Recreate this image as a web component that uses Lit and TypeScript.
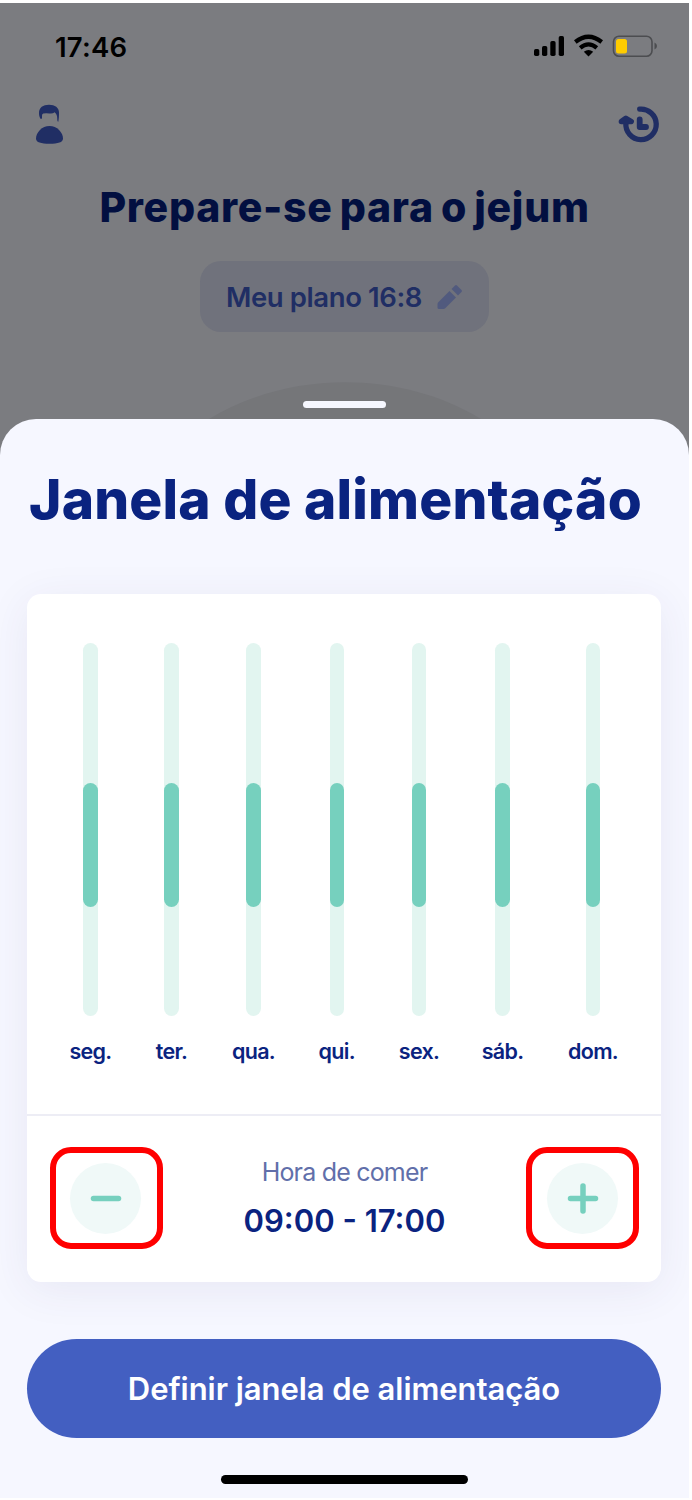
import { LitElement, html, css } from "lit";
import { customElement } from "lit/decorators.js";

const DAYS = ["seg.", "ter.", "qua.", "qui.", "sex.", "sáb.", "dom."];

@customElement("app-root")
export class AppRoot extends LitElement {
  static styles = css`
    :host { display: block; width: 692px; height: 1500px; overflow: hidden; background: #fff; font-family: Inter, "Liberation Sans", sans-serif; }
    * { box-sizing: border-box; }
    .phone { width: 689px; height: 1498px; padding-top: 3px; background: #fff; }
    .screen { height: 1495px; background: #7b7c80; display: flex; flex-direction: column; align-items: center; overflow: hidden; white-space: nowrap; }
    .status { width: 100%; height: 86px; padding: 2px 31px 0 55px; display: flex; align-items: center; justify-content: space-between; flex: none; }
    .time { font-size: 27.5px; font-weight: 600; line-height: 34px; letter-spacing: 0.2px; color: #000; }
    svg { display: block; overflow: visible; }
    .nav { width: 100%; height: 66px; padding: 0 28px 0 34px; display: flex; justify-content: space-between; align-items: center; flex: none; margin-top: 2px; }
    h1, h2 { margin: 0; }
    .heading { margin-top: 25px; font-size: 41px; line-height: 50px; height: 50px; font-weight: 800; color: #020f40; letter-spacing: 0.7px; word-spacing: -2.5px; }
    .plan { margin-top: 29px; width: 289px; height: 71px; border-radius: 21px; background: #70727c; display: flex; align-items: center; padding-left: 26px; gap: 15px; flex: none; }
    .plan-text { width: 196px; font-size: 27.5px; font-weight: 600; color: #202e64; letter-spacing: -0.4px; }
    .peek { width: 300px; height: 37px; flex: none; margin-top: 50px; display: flex; justify-content: center; position: relative; }
    .arc { position: absolute; left: 0; top: 0; }
    .grip { position: relative; width: 83px; height: 7px; border-radius: 4px; background: #f6f7ff; margin-top: 19px; }
    .sheet { width: 100%; flex: 1; background: #f6f7ff; border-radius: 36px 36px 0 0; padding: 46px 28px 0 27px; display: flex; flex-direction: column; align-items: center; }
    .title { align-self: flex-start; margin-left: 2px; font-size: 55px; font-weight: 800; line-height: 68px; color: #0a2380; letter-spacing: 0.2px; }
    .card { width: 634px; height: 688px; margin-top: 61px; background: #fff; border-radius: 14px; box-shadow: 0 8px 44px rgba(60, 55, 110, 0.08); flex: none; }
    .chart { height: 522px; padding: 49px 0 0 22.5px; display: grid; grid-template-columns: 82px 80px 84px 82.5px 82px 85px 96px; border-bottom: 2px solid #ededf5; }
    .day { display: flex; flex-direction: column; align-items: center; }
    .track { width: 14.5px; height: 373px; border-radius: 8px; background: #e2f5f0; padding-top: 139.5px; }
    .fill { height: 124.5px; border-radius: 8px; background: #76d0be; }
    .label { margin-top: 22px; font-size: 21.5px; line-height: 26px; font-weight: 600; color: #0a2380; letter-spacing: -0.7px; }
    .controls { height: 166px; display: flex; align-items: center; justify-content: space-between; padding: 0 22px 0 23px; }
    .stepper { width: 113px; height: 102px; border: 6px solid #f00; border-radius: 21px; background: transparent; margin: 0 0 2px; padding: 0; display: flex; align-items: center; justify-content: center; }
    .minus { padding-right: 2px; }
    .plus { padding-left: 1px; }
    .disc { width: 71px; height: 71px; border-radius: 50%; background: #f0f9f8; display: flex; align-items: center; justify-content: center; }
    .summary { display: flex; flex-direction: column; align-items: center; margin-top: -2px; }
    .caption { font-size: 25px; line-height: 32px; color: #616faa; letter-spacing: -0.8px; }
    .range { margin-top: 14px; font-size: 31px; line-height: 38px; font-weight: 600; color: #0a2380; letter-spacing: 0; }
    .confirm { margin-top: 57px; width: 634px; height: 99px; border: 0; border-radius: 50px; background: #435fc1; color: #fff; font: 600 31px/40px Inter, "Liberation Sans", sans-serif; letter-spacing: -0.05px; flex: none; padding: 0; }
    .home { margin-top: 37px; width: 247px; height: 9px; border-radius: 5px; background: #000; flex: none; }
  `;

  private day(label: string) {
    return html`<div class="day"><div class="track"><div class="fill"></div></div><span class="label">${label}</span></div>`;
  }

  render() {
    return html`<main class="phone"><div class="screen">
      <div class="status"><span class="time">17:46</span>
        <svg width="124" height="24" viewBox="0 0 124 24">
          <rect x="0" y="14" width="5.3" height="7" rx="1.7"/><rect x="8" y="11" width="5.3" height="10" rx="1.7"/><rect x="16.3" y="6" width="5.3" height="15" rx="1.7"/><rect x="24.7" y="1" width="5.3" height="20" rx="1.7"/>
          <g fill="none" stroke="#000" stroke-width="4.2"><path d="M41.300 7Q54.500-3.500 67.700 7"/><path d="M46.200 12.900Q54.500 6 62.800 12.900"/></g><path d="M49.800 16.800Q54.500 13.200 59.200 16.800L54.500 21.500Z"/>
          <rect x="79.5" y="1.2" width="38.5" height="20" rx="5.5" fill="none" stroke="#4c4d50" stroke-width="1.6"/><rect x="82" y="4" width="11" height="14.5" rx="2.5" fill="#ffcc00"/><path d="M120.500 7.500q2.500 1 2.500 3.500t-2.500 3.500z" fill="#4c4d50"/>
        </svg></div>
      <div class="nav">
        <svg width="30" height="40" viewBox="0 0 30 40" fill="#202e64"><path d="M6.700 15C5.300 13 5 11 5 9C5 3.500 9 .7 15 .7S25 3.500 25 8.500C25 12 24.900 15 24.300 17.700C23.500 17.700 23.200 16.500 23.200 14C23.200 11.500 22.300 9.800 20.700 8.300Q18.500 9.900 15.500 9.400Q12 8.900 9.300 9.400Q8 9.600 8 11.500V14.500Z"/><path d="M15.500 22C23 22 29 28.500 29 34.500C29 38.500 24 39.700 15.500 39.700S2 38.500 2 34.500C2 28.500 8 22 15.500 22Z"/></svg>
        <svg width="42" height="38" viewBox="0 0 42 38" fill="none" stroke="#202e64" stroke-width="5.3" stroke-linecap="round" stroke-linejoin="round"><path d="M20.700 4.200A15.200 15.200 0 1 1 6.900 18"/><path d="M2.300 16.500L6.900 13.200L12.300 16.500Z" fill="#202e64"/><path d="M20.700 14.500v7.500h6.300" stroke-width="5.800"/></svg>
      </div>
      <h1 class="heading">Prepare-se para o jejum</h1>
      <div class="plan"><span class="plan-text">Meu plano 16:8</span><svg width="26" height="26" viewBox="0 0 26 26" fill="#515a7e"><path d="M12.500 7l6.500 6.500L8.500 24q-1 1-2 1H2q-1.500 0-1.500-1.500V20q0-1 1-2Z"/><path d="M14.500 5l3.500-3.500q1-1 2 0l4.500 4.500q1 1 0 2L21 11.500Z"/></svg></div>
      <div class="peek"><svg class="arc" width="300" height="37"><path d="M14 37C94-12 206-12 286 37Z" fill="#757679"/></svg><div class="grip"></div></div>
      <section class="sheet">
        <h2 class="title">Janela de alimentação</h2>
        <div class="card">
          <div class="chart">${DAYS.map((d) => this.day(d))}</div>
          <div class="controls">
            <button class="stepper minus" aria-label="-"><span class="disc"><svg width="32" height="32" stroke="#76d0be" stroke-width="5.5" stroke-linecap="round"><path d="M3.500 16.500h25"/></svg></span></button>
            <div class="summary"><span class="caption">Hora de comer</span><span class="range">09:00 - 17:00</span></div>
            <button class="stepper plus" aria-label="+"><span class="disc"><svg width="32" height="32" stroke="#76d0be" stroke-width="5.5" stroke-linecap="round"><path d="M3.500 16.500h25M16 4v25"/></svg></span></button>
          </div>
        </div>
        <button class="confirm">Definir janela de alimentação</button>
        <div class="home"></div>
      </section>
    </div></main>`;
  }
}
